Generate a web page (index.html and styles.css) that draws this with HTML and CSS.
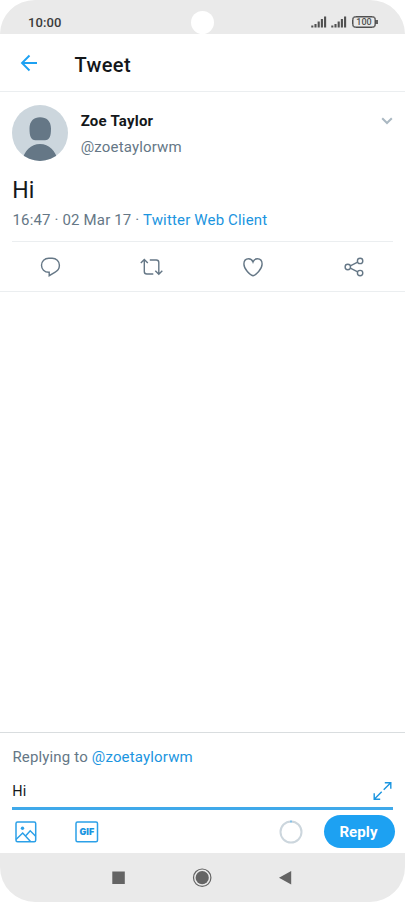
FILE: index.html
```html
<!DOCTYPE html>
<html lang="en">
<head>
<meta charset="utf-8">
<title>Tweet</title>
<link rel="stylesheet" href="styles.css">
</head>
<body>
<div class="phone">
  <header class="status">
    <span class="clock">10:00</span>
    <span class="camera"></span>
    <div class="indicators">
      <svg class="signal" width="16" height="12" viewBox="0 0 16 12"><path d="M1.300 9.500v2M4.500 8v3.500M7.700 5.500v6M10.900 3v8.500M14.100 0.500v11"/></svg>
      <svg class="signal" width="16" height="12" viewBox="0 0 16 12"><path d="M1.300 9.500v2M4.500 8v3.500M7.700 5.500v6M10.900 3v8.500M14.100 0.500v11"/></svg>
      <span class="battery">100</span>
    </div>
  </header>
  <div class="appbar">
    <svg class="back" width="18" height="18" viewBox="0 0 18 18"><path d="M17 9H2M9.500 1.500L2 9L9.500 16.500"/></svg>
    <h1>Tweet</h1>
  </div>
  <main>
    <article class="tweet">
      <div class="author">
        <svg width="56" height="56" viewBox="0 0 56 56"><clipPath id="disc"><circle cx="28" cy="28" r="28"/></clipPath><g clip-path="url(#disc)"><path fill="#ccd6dd" d="M0 0h56v56H0z"/><path fill="#657786" d="M28 12.200C34.500 12.200 39 16 39 23.500C39 31.500 37.500 35.200 33 35.200H23.500C19 35.200 17.500 31.500 17.500 23.500C17.500 16 22 12.200 28 12.200ZM10 56C12 46 19 39 28 39S44 46 46 56Z"/></g></svg>
        <div class="names"><strong>Zoe Taylor</strong><span>@zoetaylorwm</span></div>
        <svg class="chevron" width="12" height="8" viewBox="0 0 12 8"><path d="M1.200 1.200L6 6L10.800 1.200"/></svg>
      </div>
      <p class="message">Hi</p>
      <p class="meta">16:47 · 02 Mar 17 · <a>Twitter Web Client</a></p>
    </article>
    <div class="actions">
      <svg width="24" height="24" viewBox="0 0 24 24"><path d="M10.900 17.300C6.300 17.300 3.500 14.100 3.500 10.300C3.500 6.200 6.700 3.300 10.700 3.300H14.200C18.200 3.300 21.400 6.300 21.400 10.200C21.400 13.400 19.700 15.700 17.200 17.100L11.200 20.700V17.300Z"/></svg>
      <svg width="24" height="24" viewBox="0 0 24 24"><path d="M1.800 8L5.300 4.500L8.800 8M5.300 5V16.500Q5.300 19 7.800 19H14.300M10.800 5H17.300Q19.800 5 19.800 7.500V19M16.300 15.800L19.800 19.300L23.300 15.800"/></svg>
      <svg width="24" height="24" viewBox="0 0 24 24"><path d="M12 20.700C9 20.200 2.900 14 2.900 9C2.900 5.700 4.900 3.700 7.600 3.700C9.700 3.700 11.200 4.800 12 7C12.800 4.800 14.300 3.700 16.400 3.700C19.100 3.700 21.100 5.700 21.100 9C21.100 14 15 20.200 12 20.700Z"/></svg>
      <svg width="24" height="24" viewBox="0 0 24 24"><circle cx="5.800" cy="12" r="2.700"/><circle cx="18.100" cy="5.900" r="2.700"/><circle cx="18.100" cy="18.100" r="2.700"/><path d="M8.300 10.800L15.700 7.100M8.300 13.200L15.700 16.900"/></svg>
    </div>
  </main>
  <section class="composer">
    <p class="replying">Replying to <a>@zoetaylorwm</a></p>
    <div class="draft">
      <span>Hi</span>
      <svg width="20" height="20" viewBox="0 0 20 20"><path d="M11.800 1.700H17.800V7.700M17.500 2L10.700 8.800M1.200 12.300V18.300H7.200M1.500 18L8.700 10.800"/></svg>
    </div>
    <div class="tools">
      <svg class="photo" width="22" height="22" viewBox="0 0 22 22"><rect x="1" y="1" width="19.700" height="19.700" rx="1.500"/><path d="M1 18.500L7.700 12L15.500 20.500M11 14.500L15.200 9.800L20.700 15.300"/><circle class="dot" cx="7.500" cy="7.200" r="1.700"/></svg>
      <svg class="gif" width="24" height="22" viewBox="0 0 24 22"><rect x="1" y="1" width="21.500" height="19.700" rx="1.500"/><text x="11.900" y="14" text-anchor="middle">GIF</text></svg>
      <svg class="counter" width="24" height="24" viewBox="0 0 24 24"><circle cx="12" cy="12" r="10.500"/><path d="M11.600 1.500h.8"/></svg>
      <button>Reply</button>
    </div>
  </section>
  <nav class="navbar">
    <svg width="405" height="49" viewBox="0 0 405 49"><g fill="#646464"><path d="M112.300 18.500h12.500v12.500h-12.500zM291.200 18v13.500L279 24.700z"/><circle cx="202.200" cy="24.700" r="6.600"/></g><circle cx="202.200" cy="24.700" r="8.700" fill="none" stroke="#646464" stroke-width="1.200"/></svg>
  </nav>
</div>
</body>
</html>
```
FILE: styles.css
```css
* { box-sizing: border-box; }
body { margin: 0; background: #fff; font-family: Roboto, sans-serif; color: #14171a; }
p, h1 { margin: 0; }
a { color: #1b95e0; }
svg { display: block; flex: none; fill: none; }

.phone { width: 405px; height: 902px; display: flex; flex-direction: column; overflow: hidden; }
.status { position: relative; height: 34px; flex: none; display: flex; justify-content: space-between; padding: 0 26px 0 28px; background: #eaeaea; border-radius: 35px 35px 0 0 / 34px 34px 0 0; }
.clock { font-size: 13px; line-height: 16px; margin-top: 15px; font-weight: 500; letter-spacing: .1px; color: #3c3c3c; }
.camera { position: absolute; left: 191px; top: 10.500px; width: 23px; height: 23px; border-radius: 50%; background: #fff; }
.indicators { display: flex; align-items: flex-start; gap: 4px; padding-top: 16px; }
.signal { stroke: #505050; stroke-width: 2.100; position: relative; left: -1px; }
.battery { position: relative; width: 24px; height: 12px; margin-right: 3px; border: 1px solid #505050; box-shadow: inset 0 0 0 .5px #505050; border-radius: 3.500px; font-size: 9px; line-height: 11px; font-weight: 500; text-align: center; color: #505050; }
.battery::after { content: ""; position: absolute; right: -3px; top: 3px; width: 2px; height: 4px; background: #606060; }

.appbar { height: 58px; flex: none; display: flex; align-items: center; padding-left: 20px; border-bottom: 1px solid #ebeef0; }
.back { stroke: #1da1f2; stroke-width: 1.900; margin-top: 1px; }
.appbar h1 { margin: 4px 0 0 36.500px; font-size: 20px; line-height: 24px; font-weight: 500; letter-spacing: .38px; }

main { flex: 1; }
.tweet { margin: 0 12px; height: 150px; padding-top: 13px; border-bottom: 1px solid #ebeef0; }
.author { display: flex; height: 56px; }
.names { display: flex; flex-direction: column; margin-left: 12.700px; flex: 1; }
.names strong { font-size: 15px; line-height: 20px; margin-top: 6px; font-weight: 700; letter-spacing: .22px; }
.names span { font-size: 15px; line-height: 20px; margin-top: 6px; color: #657786; letter-spacing: .16px; }
.chevron { margin-top: 12px; stroke: #aab8c2; stroke-width: 2; }
.message { font-size: 23px; line-height: 28px; margin-top: 16px; padding-left: .3px; }
.meta { font-size: 15px; line-height: 20px; margin-top: 5px; padding-left: .5px; color: #657786; letter-spacing: .16px; }
.actions { height: 50px; display: flex; justify-content: space-between; align-items: center; padding: 0 39px 0 38px; border-bottom: 1px solid #ebeef0; }
.actions svg { stroke: #657786; stroke-width: 1.400; }

.composer { height: 121px; flex: none; border-top: 1px solid #d9dddf; padding: 0 12px; }
.replying { margin-top: 14px; padding-left: .4px; font-size: 15px; line-height: 20px; color: #657786; letter-spacing: .16px; }
.draft { height: 43px; display: flex; justify-content: space-between; border-bottom: 3px solid #3fa9ea; font-size: 14.500px; }
.draft span { line-height: 20px; margin-top: 15px; padding-left: .3px; }
.draft svg { margin-top: 14px; stroke: #1b95e0; stroke-width: 1.400; }
.tools { display: flex; align-items: center; height: 43px; margin-right: -2px; }
.photo { margin-left: 3px; stroke: #2ba0e8; stroke-width: 1.500; }
.photo .dot { fill: #2ba0e8; stroke: none; }
.gif { margin-left: 38px; stroke: #2ba0e8; stroke-width: 1.500; }
.gif text { font: 900 9px Inter, sans-serif; fill: #1b95e0; stroke: none; }
.counter { margin-left: auto; margin-right: 21px; stroke: #ccd6dd; stroke-width: 2; }
.counter path { stroke: #1da1f2; }
.tools button { width: 71px; height: 33px; padding: 0 2px 0 0; border: 0; border-radius: 17px; background: #1da1f2; color: #fff; font: 700 15px/34px Roboto, sans-serif; letter-spacing: .1px; }
.navbar { height: 49px; flex: none; background: #eaeaea; border-radius: 0 0 35px 35px; }
```
